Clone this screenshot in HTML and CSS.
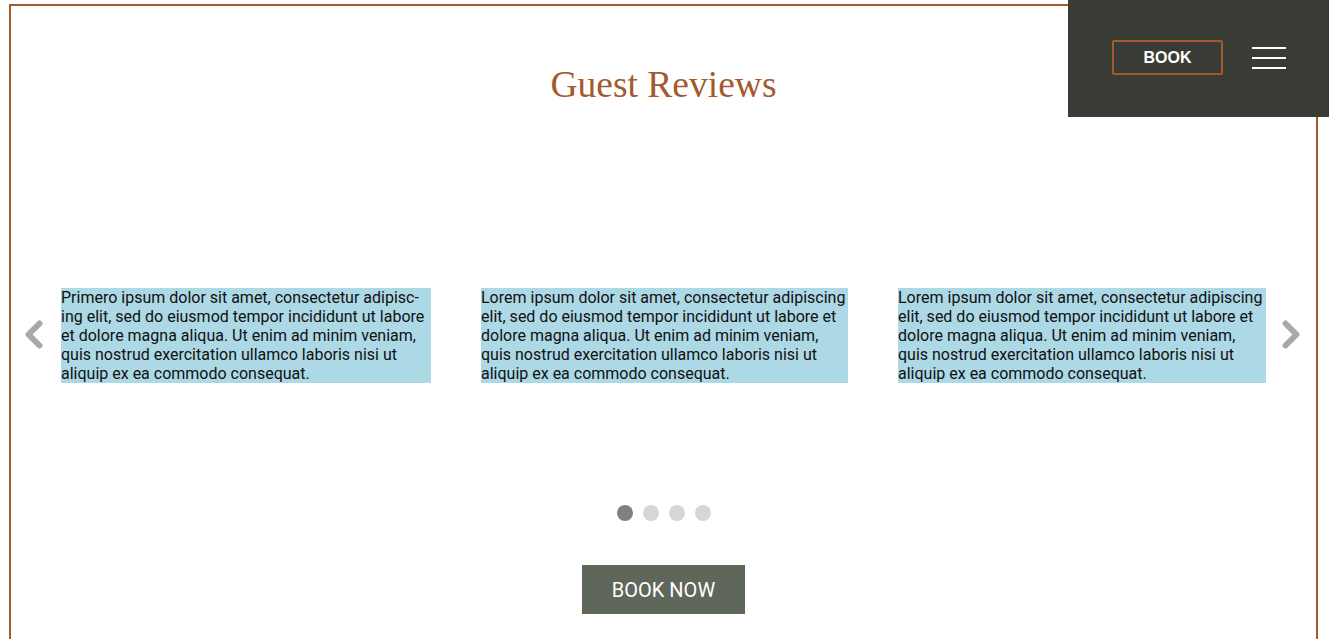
FILE: index.html
```html
<!DOCTYPE html>
<html lang="en">
<head>
<meta charset="utf-8">
<title>Guest Reviews</title>
<link rel="stylesheet" href="styles.css">
</head>
<body>
<header class="topbar">
  <a class="book-btn" href="#">BOOK</a>
  <button class="menu-btn" aria-label="Menu"><span></span><span></span><span></span></button>
</header>
<main class="frame">
  <h2 class="title">Guest Reviews</h2>
  <section class="carousel">
    <button class="arrow arrow-prev" aria-label="Previous">
      <svg width="18" height="29" viewBox="0 0 18 29"><polyline points="14.5,3.5 3.5,14.5 14.5,25.5" fill="none" stroke="#a8a8a8" stroke-width="6" stroke-linecap="round" stroke-linejoin="round"/></svg>
    </button>
    <div class="cards">
      <p class="card">Primero ipsum dolor sit amet, consectetur adipisc&shy;ing elit, sed do eiusmod tempor incididunt ut labore et dolore magna aliqua. Ut enim ad minim veniam, quis nostrud exercitation ullamco laboris nisi ut aliquip ex ea commodo consequat.</p>
      <p class="card">Lorem ipsum dolor sit amet, consectetur adipiscing elit, sed do eiusmod tempor incididunt ut labore et dolore magna aliqua. Ut enim ad minim veniam, quis nostrud exercitation ullamco laboris nisi ut aliquip ex ea commodo consequat.</p>
      <p class="card">Lorem ipsum dolor sit amet, consectetur adipiscing elit, sed do eiusmod tempor incididunt ut labore et dolore magna aliqua. Ut enim ad minim veniam, quis nostrud exercitation ullamco laboris nisi ut aliquip ex ea commodo consequat.</p>
    </div>
    <button class="arrow" aria-label="Next">
      <svg width="18" height="29" viewBox="0 0 18 29"><polyline points="3.5,3.5 14.5,14.5 3.5,25.5" fill="none" stroke="#a8a8a8" stroke-width="6" stroke-linecap="round" stroke-linejoin="round"/></svg>
    </button>
  </section>
  <div class="dots">
    <span class="dot active"></span><span class="dot"></span><span class="dot"></span><span class="dot"></span>
  </div>
  <div class="cta-row"><a class="cta" href="#">BOOK NOW</a></div>
</main>
</body>
</html>
```
FILE: styles.css
```css
html, body {
  margin: 0;
  padding: 0;
  background: #fff;
  overflow: hidden;
}
body {
  font-family: Roboto, "Liberation Sans", sans-serif;
  height: 639px;
}
.frame {
  margin: 4px 11px 0 9px;
  border: 2px solid #a35a2c;
  border-bottom: none;
  height: 635px;
  box-sizing: border-box;
  overflow: hidden;
}
.title {
  margin: 57px 0 0;
  font-family: "Liberation Serif", "Times New Roman", serif;
  font-weight: normal;
  font-size: 37.5px;
  line-height: 44px;
  color: #a35a2c;
  text-align: center;
}
.carousel {
  margin-top: 181px;
  display: flex;
  align-items: center;
}
.arrow {
  width: 50px;
  flex: 0 0 50px;
  background: none;
  border: none;
  padding: 0;
  display: flex;
  justify-content: center;
  align-items: center;
  margin-top: -2px;
}
.arrow-prev svg { margin-right: 5px; }
.arrow svg { display: block; }
.cards {
  flex: 1;
  display: grid;
  grid-template-columns: 370fr 367fr 368fr;
  gap: 50px;
}
.card {
  margin: 0;
  background: #add8e6;
  color: #111;
  font-size: 16px;
  line-height: 19px;
}
.dots {
  margin-top: 122px;
  display: flex;
  justify-content: center;
  gap: 10px;
}
.dot {
  width: 16px;
  height: 16px;
  border-radius: 50%;
  background: #d6d6d6;
}
.dot.active { background: #808080; }
.cta-row {
  margin-top: 44px;
  display: flex;
  justify-content: center;
}
.cta {
  display: block;
  background: #5f675b;
  color: #fff;
  text-decoration: none;
  font-size: 20px;
  line-height: 50px;
  height: 49px;
  width: 163px;
  text-align: center;
}
.topbar {
  position: absolute;
  top: 0;
  right: 0;
  width: 261px;
  height: 117px;
  background: #393c35;
  display: flex;
  align-items: flex-start;
  padding: 40px 0 0 44px;
  box-sizing: border-box;
  z-index: 2;
}
.book-btn {
  display: block;
  width: 111px;
  height: 35px;
  box-sizing: border-box;
  border: 2px solid #a35a2c;
  border-radius: 2px;
  color: #fff;
  text-decoration: none;
  font-family: "Liberation Sans", Arial, sans-serif;
  font-weight: bold;
  font-size: 16px;
  line-height: 31px;
  text-align: center;
}
.menu-btn {
  margin: 7px 0 0 29px;
  width: 34px;
  height: 22px;
  padding: 0;
  border: none;
  background: none;
  display: flex;
  flex-direction: column;
  justify-content: space-between;
}
.menu-btn span {
  display: block;
  height: 2px;
  background: #fff;
}
```
